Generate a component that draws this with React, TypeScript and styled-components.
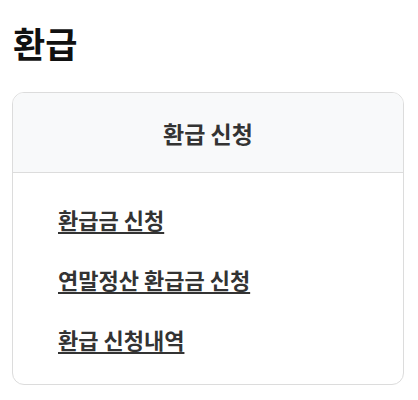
import React from 'react';
import styled, { createGlobalStyle } from 'styled-components';

const GlobalStyle = createGlobalStyle`
  body {
    margin: 0;
    background: #fff;
    font-family: "Noto Sans CJK KR", "Noto Sans", sans-serif;
  }
`;

const Page = styled.div`
  padding: 18px 14px 16px 12px;
`;

const Title = styled.h1`
  margin: 0 0 24px 1px;
  font-size: 35px;
  font-weight: 700;
  line-height: 50px;
  color: #111;
`;

const Card = styled.section`
  border: 1px solid #dcdcdc;
  border-radius: 12px;
  overflow: hidden;
`;

const CardHeader = styled.h2`
  margin: 0;
  height: 79px;
  display: flex;
  align-items: center;
  justify-content: center;
  background: #f8f9fa;
  border-bottom: 1px solid #dcdcdc;
  font-size: 23px;
  font-weight: 700;
  color: #333;
`;

const LinkList = styled.ul`
  list-style: none;
  margin: 0;
  padding: 30px 0 26px 45px;
  display: flex;
  flex-direction: column;
  gap: 25px;
`;

const LinkItem = styled.li`
  line-height: 32px;
`;

const NavLink = styled.a`
  font-size: 22px;
  font-weight: 700;
  color: #333;
  text-decoration: underline;
  text-decoration-thickness: 2px;
  text-underline-offset: 3px;
`;

const links = ['환급금 신청', '연말정산 환급금 신청', '환급 신청내역'];

export default function App() {
  return (
    <>
      <GlobalStyle />
      <Page>
        <Title>환급</Title>
        <Card>
          <CardHeader>환급 신청</CardHeader>
          <LinkList>
            {links.map((label) => (
              <LinkItem key={label}>
                <NavLink href="#">{label}</NavLink>
              </LinkItem>
            ))}
          </LinkList>
        </Card>
      </Page>
    </>
  );
}
